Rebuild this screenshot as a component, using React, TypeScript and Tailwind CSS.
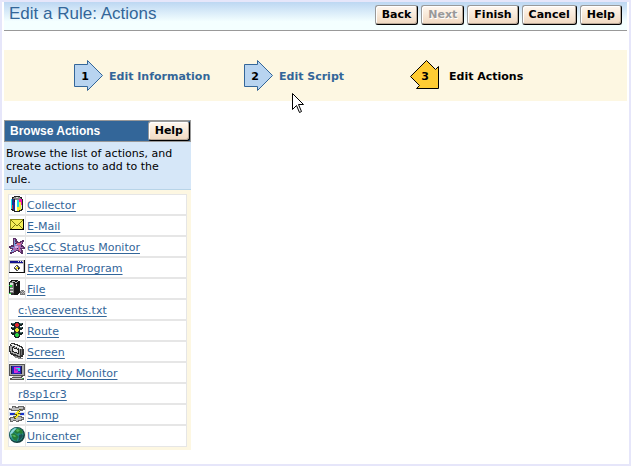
import type { ReactNode } from "react"

interface ActionItem {
  id: string
  label: string
  icon?: ReactNode
}

const iconClass = "block h-4 w-4 shrink-0"

const CollectorIcon = () => (
  <svg viewBox="0 0 16 16" className={iconClass} shapeRendering="crispEdges">
    <path d="M5 0h6v1h2v2h1v11h-1v1h-2v1H5v-1H3v-1H2V3h1V1h2z" fill="#222" />
    <path d="M5 1h6v1h1v1h-2v1H6V3H4V2h1z" fill="#888" />
    <path d="M7 1h2v1H7z" fill="#ddd" />
    <path d="M2 3h1v10H2z" fill="#19e5e5" />
    <path d="M3 3h2v3h1v8H4v-1H3z" fill="#1d2f96" />
    <path d="M3 9h1v4H3z" fill="#d13636" />
    <path d="M6 4h2v11H6z" fill="#fff" />
    <path d="M8 4h2v7H8z" fill="#25dbe5" />
    <path d="M8 11h2v4H8z" fill="#f4ef32" />
    <path d="M10 3h3v6h-3z" fill="#f01aaf" />
    <path d="M10 6h2v8h-2z" fill="#f4ef32" />
    <path d="M12 9h1v4h-1z" fill="#ddd" />
  </svg>
)

const MailIcon = () => (
  <svg viewBox="0 0 16 16" className={iconClass} shapeRendering="crispEdges">
    <path d="M1 2h14v11H1z" fill="#000" />
    <path d="M1 2h13v10H1z" fill="#8c8c14" />
    <path d="M2 3h12v9H2z" fill="#f4ee58" />
    <path d="M2 3h1v1h1v1h1v1h1v1h1v1h2V7h1V6h1V5h1V4h1V3h1v1h-1v1h-1v1h-1v1h-1v1H9v1H7V8H6V7H5V6H4V5H3V4H2zM2 11h1v-1h1V9h1V8h1v1H5v1H4v1H3v1H2zM14 11h-1v-1h-1V9h-1V8h-1v1h1v1h1v1h1v1h1z" fill="#77770c" />
  </svg>
)

const StatusIcon = () => (
  <svg viewBox="0 0 16 16" className={iconClass} shapeRendering="crispEdges">
    <path d="M5 0h2v1h1v2h1v1h2V3h2V2h2v2h-1v2h-1v1h1v1h1v1h1v2h-3v1h1v4h-2v-1h-1v-1H9v-1H7v1H5v1H3v1H1v-2h1v-2h1v-1H1v-1H0V8h2V7h2V0z" fill="#593164" />
    <path d="M5 1h1v3h1v2h3V5h2V4h1v2h-1v2h1v1h1v1h-3v1h1v3h-1v-1h-1v-1H7v1H5v1H3v-2h1v-2H2V9h3z" fill="#a86bb7" />
    <path d="M5 2h1v3h1v3H5zM1 9h4v1H2zM3 12h2v1H4v1H2v-1h1z" fill="#789bd8" />
    <path d="M8 5h4v1h-1v1H8zM10 9h1v4h-1z" fill="#df6782" />
    <path d="M6 8h3v2H6zM7 6h1v1H7z" fill="#d5aee6" />
    <path d="M8 10h1v1H8zM6 5h1v1H6zM12 8h1v1h-1z" fill="#30254a" />
  </svg>
)

const ProgramIcon = () => (
  <svg viewBox="0 0 16 16" className={iconClass} shapeRendering="crispEdges">
    <path d="M0 1h16v13H0z" fill="#111" />
    <path d="M0 1h15v12H0z" fill="#bdbdbd" />
    <path d="M1 2h13v2H1z" fill="#14148e" />
    <path d="M9 2h1v1H9zM11 2h1v1h-1zM13 2h1v1h-1z" fill="#eee" />
    <path d="M1 5h13v8H1z" fill="#fff" />
    <path d="M7 6h2v1h1v1h1v2h-1v1H9v1H7v-1H6v-1H5V8h1V7h1z" fill="#555" />
    <path d="M7 7h1v1H7zM6 8h1v1H6zM8 10h1v1H8z" fill="#fff" />
    <path d="M7 8h2v2H7z" fill="#e7da20" />
    <path d="M9 9h1v1H9z" fill="#000" />
  </svg>
)

const FileIcon = () => (
  <svg viewBox="0 0 16 16" className={iconClass} shapeRendering="crispEdges">
    <path d="M2 0h7v1h2v12h-1v1H9v1H5v-1H0V2h1V1h1z" fill="#171717" />
    <path d="M1 2h3v1h1v10H1z" fill="#777" />
    <path d="M1 3h3v2H1zM1 8h3v1H1zM1 11h3v1H1z" fill="#e1e1e1" />
    <path d="M0 5h3v1H0zM1 6h2v1H1zM0 13h2v1H0z" fill="#20df3b" />
    <path d="M3 1h3v1H3zM6 2h2v1H6zM7 4h1v2H7zM8 1h1v1H8z" fill="#bbb" />
    <path d="M2 13h3v2H2z" fill="#333" />
    <path d="M12 10h3v1h1v4h-5v-4h1z" fill="#777" />
    <path d="M12 11h1v1h-1zM14 11h1v1h-1zM13 12h1v1h-1zM15 12h1v1h-1zM12 13h1v1h-1zM14 13h1v1h-1z" fill="#bbb" />
  </svg>
)

const RouteIcon = () => (
  <svg viewBox="0 0 16 16" className={iconClass} shapeRendering="crispEdges">
    <path d="M6 0h4v1h4v2h-1v1h-2v1h3v2h-1v1h-2v2h3v2h-1v1h-2v2h-1v1H6v-1H5v-2H3v-1H2v-2h3V8H3V7H2V5h3V4H3V3H2V1h4z" fill="#142323" />
    <path d="M6 1h4v14H6z" fill="#343030" />
    <path d="M7 1h2v1h1v2H9v1H7V4H6V2h1z" fill="#df252d" />
    <path d="M7 6h2v1h1v2H9v1H7V9H6V7h1z" fill="#ebe42d" />
    <path d="M7 11h2v1h1v2H9v1H7v-1H6v-2h1z" fill="#29d346" />
    <path d="M3 1h2v1H3zM3 5h2v1H3zM3 10h2v1H3zM11 1h2v1h-2zM11 5h2v1h-2zM11 10h2v1h-2z" fill="#547777" />
  </svg>
)

const ScreenIcon = () => (
  <svg viewBox="0 0 16 16" className={iconClass} shapeRendering="crispEdges">
    <path d="M2 0h4v1h3v1h2v1h2v1h1v2h1v6h-1v2h-2v1H8v-1H6v-1H4v-1H2v-1H1V9H0V3h1V1h1z" fill="#333" />
    <path d="M2 1h3v1h3v1h2v1h2v1h1v1h-3V5H8V4H6V3H3V2H2z" fill="#eee" />
    <path d="M1 3h3v1h3v1h2v1h2v7H9v-1H7v-1H4v-1H2V8H1z" fill="#a8a8a8" />
    <path d="M3 4h2v1h3v1h2v5H8v-1H5V9H3z" fill="#222" />
    <path d="M4 5h1v1h3v1h1v3H8V9H5V8H4z" fill="#ededed" />
    <path d="M12 6h1v6h-1z" fill="#777" />
    <path d="M5 13h3v1h3v1h3v1H9v-1H6v-1H5z" fill="#888" />
  </svg>
)

const SecurityIcon = () => (
  <svg viewBox="0 0 16 16" className={iconClass} shapeRendering="crispEdges">
    <path d="M0 0h16v12h-2v1h-1v1h2v2H1v-2h2v-1h1v-1H0z" fill="#555" />
    <path d="M1 1h14v10H1z" fill="#aaa" />
    <path d="M2 2h11v8H2z" fill="#181842" />
    <path d="M3 2h9v8H3z" fill="#2424b4" />
    <path d="M5 3h6v4H9v2H5z" fill="#d52ed9" />
    <path d="M7 4h4v3H7z" fill="#26d7ec" />
    <path d="M6 5h3v2H6zM8 8h3v1H8z" fill="#a328dd" />
    <path d="M4 12h8v1H4zM3 14h10v1H3z" fill="#c4c4c4" />
    <path d="M13 14h1v1h-1z" fill="#27d23d" />
  </svg>
)

const SnmpIcon = () => (
  <svg viewBox="0 0 16 16" className={iconClass} shapeRendering="crispEdges">
    <path d="M3 0h4v1h2V0h6v1h1v3h-2v1H2V4H0V2h3z" fill="#666" />
    <path d="M4 1h2v1h4V1h4v2h-2v1H3V3H1V2h3z" fill="#bcbcbc" />
    <path d="M1 11h3v-1h9v1h2v3h-2v1h-3v1H7v-1H4v1H1v-2H0v-2h1z" fill="#666" />
    <path d="M2 12h3v-1h7v1h2v1h-2v1H9v1H7v-1H4v1H2z" fill="#bcbcbc" />
    <path d="M0 6h16v4H0z" fill="#d7e2ee" />
    <path d="M1 7h14v2H1z" fill="#182fc9" />
    <path d="M10 3h2v1h-1v2h-1v1h2v1h-1v1h-1v1H9v1H8v1H7v1H5v-2h1v-1h1V9H5V8h1V7h1V6h1V5h1V4h1z" fill="#5b5717" />
    <path d="M10 4h1v1h-1v2H9v1h2v1h-1v1H9v1H8v1H6v-1h1v-1h1V8H6V7h1V6h1V5h2z" fill="#f8e925" />
  </svg>
)

const UnicenterIcon = () => (
  <svg viewBox="0 0 16 16" className={iconClass}>
    <circle cx="8" cy="8" r="8" fill="#123e3d" />
    <circle cx="7.5" cy="7.5" r="7" fill="#258d85" />
    <path d="M1 6l2-3 3-2 2 1-2 2-2 1-1 3-1 3z" fill="#92d9db" />
    <path d="M6 3l3-2 4 2 1 3-2 1-2-1-2 1-3-2z" fill="#257c35" />
    <path d="M2 7l3-1 3 2 2 2-2 2v2l-3-1-2-3z" fill="#237b3b" />
    <path d="M8 2l3 1-2 2-2-1zM3 8h3l1 2H5z" fill="#50b457" />
    <path d="M10 8l3-1 1 2-3 4-2 1 1-3z" fill="#1b5051" />
  </svg>
)

const actions: ActionItem[] = [
  { id: "collector", label: "Collector", icon: <CollectorIcon /> },
  { id: "email", label: "E-Mail", icon: <MailIcon /> },
  { id: "escc", label: "eSCC Status Monitor", icon: <StatusIcon /> },
  { id: "program", label: "External Program", icon: <ProgramIcon /> },
  { id: "file", label: "File", icon: <FileIcon /> },
  { id: "eacevents", label: "c:\\eacevents.txt" },
  { id: "route", label: "Route", icon: <RouteIcon /> },
  { id: "screen", label: "Screen", icon: <ScreenIcon /> },
  { id: "security", label: "Security Monitor", icon: <SecurityIcon /> },
  { id: "r8sp1cr3", label: "r8sp1cr3" },
  { id: "snmp", label: "Snmp", icon: <SnmpIcon /> },
  { id: "unicenter", label: "Unicenter", icon: <UnicenterIcon /> },
]

const WizardButton = ({ children, disabled }: { children: ReactNode; disabled?: boolean }) => (
  <button
    type="button"
    disabled={disabled}
    className="h-5 rounded-[3px] border border-t-[#999] border-l-[#999] border-r-black border-b-black bg-linear-to-b from-[#fff8f0] to-[#f0d8c0] px-[6px] text-[11px] leading-4 font-bold text-black shadow-[inset_1px_1px_0_#fff,inset_-1px_-1px_0_#b8a898] disabled:text-[#999] disabled:[text-shadow:1px_1px_0_#fff]"
  >
    {children}
  </button>
)

const StepArrow = ({ step }: { step: number }) => (
  <svg viewBox="0 0 29 31" className="h-[31px] w-[29px] shrink-0">
    <path d="M.5 4.5h13v-4l15 15-15 15v-4H.5z" fill="#b8d4f0" stroke="#336699" />
    <text x="11" y="20" textAnchor="middle" className="text-[11px] font-bold">{step}</text>
  </svg>
)

const CurrentStepArrow = ({ step }: { step: number }) => (
  <svg viewBox="0 0 29 31" className="h-[31px] w-[29px] shrink-0">
    <path d="M16.5.5l9 9 3-3v22h-22l3-3-9-9z" fill="#ffcc33" stroke="#000" />
    <text x="15" y="20" textAnchor="middle" className="text-[11px] font-bold">{step}</text>
  </svg>
)

export default function App() {
  return (
    <div className="relative min-h-screen border-2 border-[#e6e6fa] bg-white px-[2px] font-['DejaVu_Sans',Verdana,sans-serif] text-[11px] text-black">
      {/* Title bar */}
      <header className="flex h-[29px] items-start justify-between border-b border-[#999] bg-linear-to-b from-[#bdd7f2] to-[#f4ffff] to-70% pr-[5px] pl-[5px]">
        <h1 className="font-['Liberation_Sans',Arial,sans-serif] text-[17px] leading-6 text-[#336699]">
          Edit a Rule: Actions
        </h1>
        <div className="flex gap-[3px] pt-[3px]">
          <WizardButton>Back</WizardButton>
          <WizardButton disabled>Next</WizardButton>
          <WizardButton>Finish</WizardButton>
          <WizardButton>Cancel</WizardButton>
          <WizardButton>Help</WizardButton>
        </div>
      </header>

      {/* Wizard steps */}
      <nav className="mt-[19px] flex h-[51px] items-center bg-[#fdf7e2] pl-[70px] font-bold whitespace-nowrap">
        <a href="#information" className="flex w-[170px] items-center gap-[6px] text-[#336699]">
          <StepArrow step={1} />
          <span className="pt-[3px]">Edit Information</span>
        </a>
        <a href="#script" className="flex w-[166px] items-center gap-[6px] text-[#336699]">
          <StepArrow step={2} />
          <span className="pt-[3px]">Edit Script</span>
        </a>
        <span className="flex items-center gap-[10px]" aria-current="step">
          <CurrentStepArrow step={3} />
          <span className="pt-[3px]">Edit Actions</span>
        </span>
      </nav>

      <aside className="mt-[19px] w-[187px] bg-[#fdf7e2]">
        <div className="flex h-[22px] items-center justify-between border border-[#999] bg-[#336699] pl-[5px]">
          <h2 className="font-['Liberation_Sans',Arial,sans-serif] text-[12px] font-bold text-white">
            Browse Actions
          </h2>
          <WizardButton>Help</WizardButton>
        </div>
        <p className="border-b border-[#b8d4e8] bg-[#d6e7f8] pt-[5px] pr-3 pb-[3px] pl-[2px] leading-[13px]">
          Browse the list of actions, and create actions to add to the rule.
        </p>
        <div className="px-1 pt-1 pb-[3px]">
          <ul className="border border-[#e6e6e6] bg-white">
            {actions.map((action) => (
              <li key={action.id} className="flex h-[21px] border-b-2 border-[#e6e6e6] last:h-5 last:border-b-0">
                {action.icon ? (
                  <span className="w-[17px] shrink-0 border-r border-[#e6e6e6] pt-px">{action.icon}</span>
                ) : (
                  <span className="w-2 shrink-0" />
                )}
                <a href={`#${action.id}`} className="ml-px leading-[22px] text-[#336699] underline decoration-1 underline-offset-2 [text-decoration-skip-ink:none]">
                  {action.label}
                </a>
              </li>
            ))}
          </ul>
        </div>
      </aside>

      {/* Mouse pointer */}
      <svg viewBox="0 0 12 21" className="pointer-events-none absolute top-[91px] left-[290px] h-[21px] w-3">
        <path d="M.5.5v16l4-4 3 7 2-1-3-7h5z" fill="#fff" stroke="#000" />
      </svg>
    </div>
  )
}
